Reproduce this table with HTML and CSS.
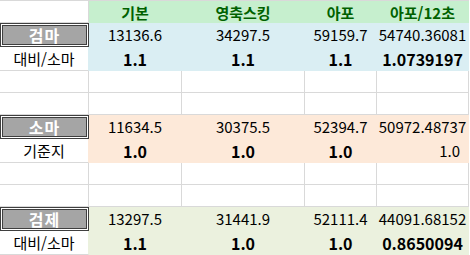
FILE: index.html
```html
<!DOCTYPE html>
<html lang="ko">
<head>
<meta charset="utf-8">
<title>Sheet</title>
<link rel="stylesheet" href="styles.css">
</head>
<body>
<div class="sheet">
  <div class="c"></div>
  <div class="c hd">기본</div>
  <div class="c hd">영축스킹</div>
  <div class="c hd">아포</div>
  <div class="c hd">아포/12초</div>

  <div class="c chk">검마</div>
  <div class="c num blue">13136.6</div>
  <div class="c num blue">34297.5</div>
  <div class="c num blue">59159.7</div>
  <div class="c num blue">54740.36081</div>

  <div class="c lbl to-blue">대비/소마</div>
  <div class="c num b blue">1.1</div>
  <div class="c num b blue">1.1</div>
  <div class="c num b blue">1.1</div>
  <div class="c num b blue">1.0739197</div>

  <div class="c"></div><div class="c"></div><div class="c"></div><div class="c"></div><div class="c"></div>
  <div class="c"></div><div class="c"></div><div class="c"></div><div class="c"></div><div class="c"></div>

  <div class="c chk">소마</div>
  <div class="c num orange">11634.5</div>
  <div class="c num orange">30375.5</div>
  <div class="c num orange">52394.7</div>
  <div class="c num orange">50972.48737</div>

  <div class="c lbl to-orange">기준지</div>
  <div class="c num b orange">1.0</div>
  <div class="c num b orange">1.0</div>
  <div class="c num b orange">1.0</div>
  <div class="c num orange right">1.0</div>

  <div class="c"></div><div class="c"></div><div class="c"></div><div class="c"></div><div class="c"></div>
  <div class="c"></div><div class="c"></div><div class="c"></div><div class="c"></div><div class="c"></div>

  <div class="c chk">검제</div>
  <div class="c num olive">13297.5</div>
  <div class="c num olive">31441.9</div>
  <div class="c num olive">52111.4</div>
  <div class="c num olive">44091.68152</div>

  <div class="c lbl to-olive">대비/소마</div>
  <div class="c num b olive">1.1</div>
  <div class="c num b olive">1.0</div>
  <div class="c num b olive">1.0</div>
  <div class="c num b olive">0.8650094</div>
</div>
</body>
</html>
```

FILE: styles.css
```css
html, body {
  margin: 0;
  padding: 0;
  background: #ffffff;
}

body {
  width: 470px;
  height: 255px;
  overflow: hidden;
  font-family: "Noto Sans CJK KR", "Noto Sans", sans-serif;
  color: #000000;
}

.sheet {
  display: grid;
  grid-template-columns: 89px 93px 123px 72px 92px;
  grid-template-rows: 22px 24px 24px 22px 22px 24px 24px 22px 22px 24px 24px;
  border-top: 1px solid #d9d9d9;
  width: 469px;
}

.c {
  box-sizing: border-box;
  border-right: 1px solid #d9d9d9;
  border-bottom: 1px solid #d9d9d9;
  display: flex;
  align-items: center;
  justify-content: center;
  white-space: nowrap;
  font-size: 15px;
  line-height: 1;
}

.hd {
  background: #c6efce;
  border-color: #c6efce;
  color: #006100;
  font-weight: bold;
  align-items: flex-end;
  padding-bottom: 2px;
}

.blue {
  background: #daeef3;
  border-color: #daeef3;
}

.orange {
  background: #fde9d9;
  border-color: #fde9d9;
}

.olive {
  background: #ebf1de;
  border-color: #ebf1de;
}

.to-blue { border-right-color: #daeef3; }
.to-orange { border-right-color: #fde9d9; }
.to-olive { border-right-color: #ebf1de; }

.chk {
  background: #a5a5a5;
  background-clip: padding-box;
  border: 3px double #3f3f3f;
  color: #ffffff;
  font-weight: bold;
  font-size: 16px;
  letter-spacing: 1px;
}

.lbl {
  font-size: 15px;
}

.num {
  font-size: 15px;
}

.b {
  font-weight: bold;
  font-size: 16px;
}

.right {
  justify-content: flex-end;
  padding-right: 8px;
}
```
